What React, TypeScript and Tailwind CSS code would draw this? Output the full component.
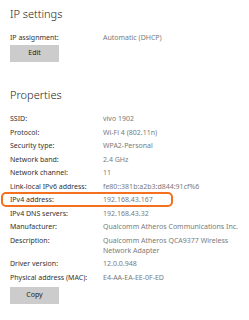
import React from 'react';

const PROPS: { label: string; value: string[] }[] = [
  { label: 'SSID:', value: ['vivo 1902'] },
  { label: 'Protocol:', value: ['Wi-Fi 4 (802.11n)'] },
  { label: 'Security type:', value: ['WPA2-Personal'] },
  { label: 'Network band:', value: ['2.4 GHz'] },
  { label: 'Network channel:', value: ['11'] },
  { label: 'Link-local IPv6 address:', value: ['fe80::381b:a2b3:d844:91cf%6'] },
  { label: 'IPv4 address:', value: ['192.168.43.167'] },
  { label: 'IPv4 DNS servers:', value: ['192.168.43.32'] },
  { label: 'Manufacturer:', value: ['Qualcomm Atheros Communications Inc.'] },
  { label: 'Description:', value: ['Qualcomm Atheros QCA9377 Wireless', 'Network Adapter'] },
  { label: 'Driver version:', value: ['12.0.0.948'] },
  { label: 'Physical address (MAC):', value: ['E4-AA-EA-EE-0F-ED'] },
];

function Row({ label, value }: { label: string; value: string[] }) {
  return (
    <div className="flex pb-[3.5px] text-[7px] leading-[10px]">
      <div className="w-[93px] shrink-0 text-[#333333]">{label}</div>
      <div className="text-[#7a7a7a]">
        {value.map((v, i) => (
          <div key={i}>{v}</div>
        ))}
      </div>
    </div>
  );
}

function Button({ children }: { children: React.ReactNode }) {
  return (
    <div className="flex h-[17px] w-[49px] items-center justify-center bg-[#cccccc] text-[7px] text-[#222222]">
      {children}
    </div>
  );
}

export default function App() {
  return (
    <div
      className="relative h-[320px] w-[249px] overflow-hidden bg-white pl-[10px]"
      style={{ fontFamily: '"Noto Sans", sans-serif' }}
    >
      {/* IP settings */}
      <div className="pt-[6px] text-[11px] font-light leading-[16px] text-[#1a1a1a]">IP settings</div>
      <div className="mt-[11px] flex text-[7px] leading-[10px]">
        <div className="w-[93px] shrink-0 text-[#333333]">IP assignment:</div>
        <div className="text-[#7a7a7a]">Automatic (DHCP)</div>
      </div>
      <div className="mt-[2px]">
        <Button>Edit</Button>
      </div>

      {/* Properties */}
      <div className="mt-[25px] text-[11px] font-light leading-[16px] text-[#1a1a1a]">Properties</div>
      <div className="mt-[11px]">
        {PROPS.map((p) => (
          <Row key={p.label} label={p.label} value={p.value} />
        ))}
      </div>
      <div className="mt-[1px]">
        <Button>Copy</Button>
      </div>

      {/* orange annotation around IPv4 address */}
      <div className="absolute left-[1px] top-[192px] h-[15px] w-[172px] rounded-[5px] border-2 border-[#f5701e]" />
    </div>
  );
}
